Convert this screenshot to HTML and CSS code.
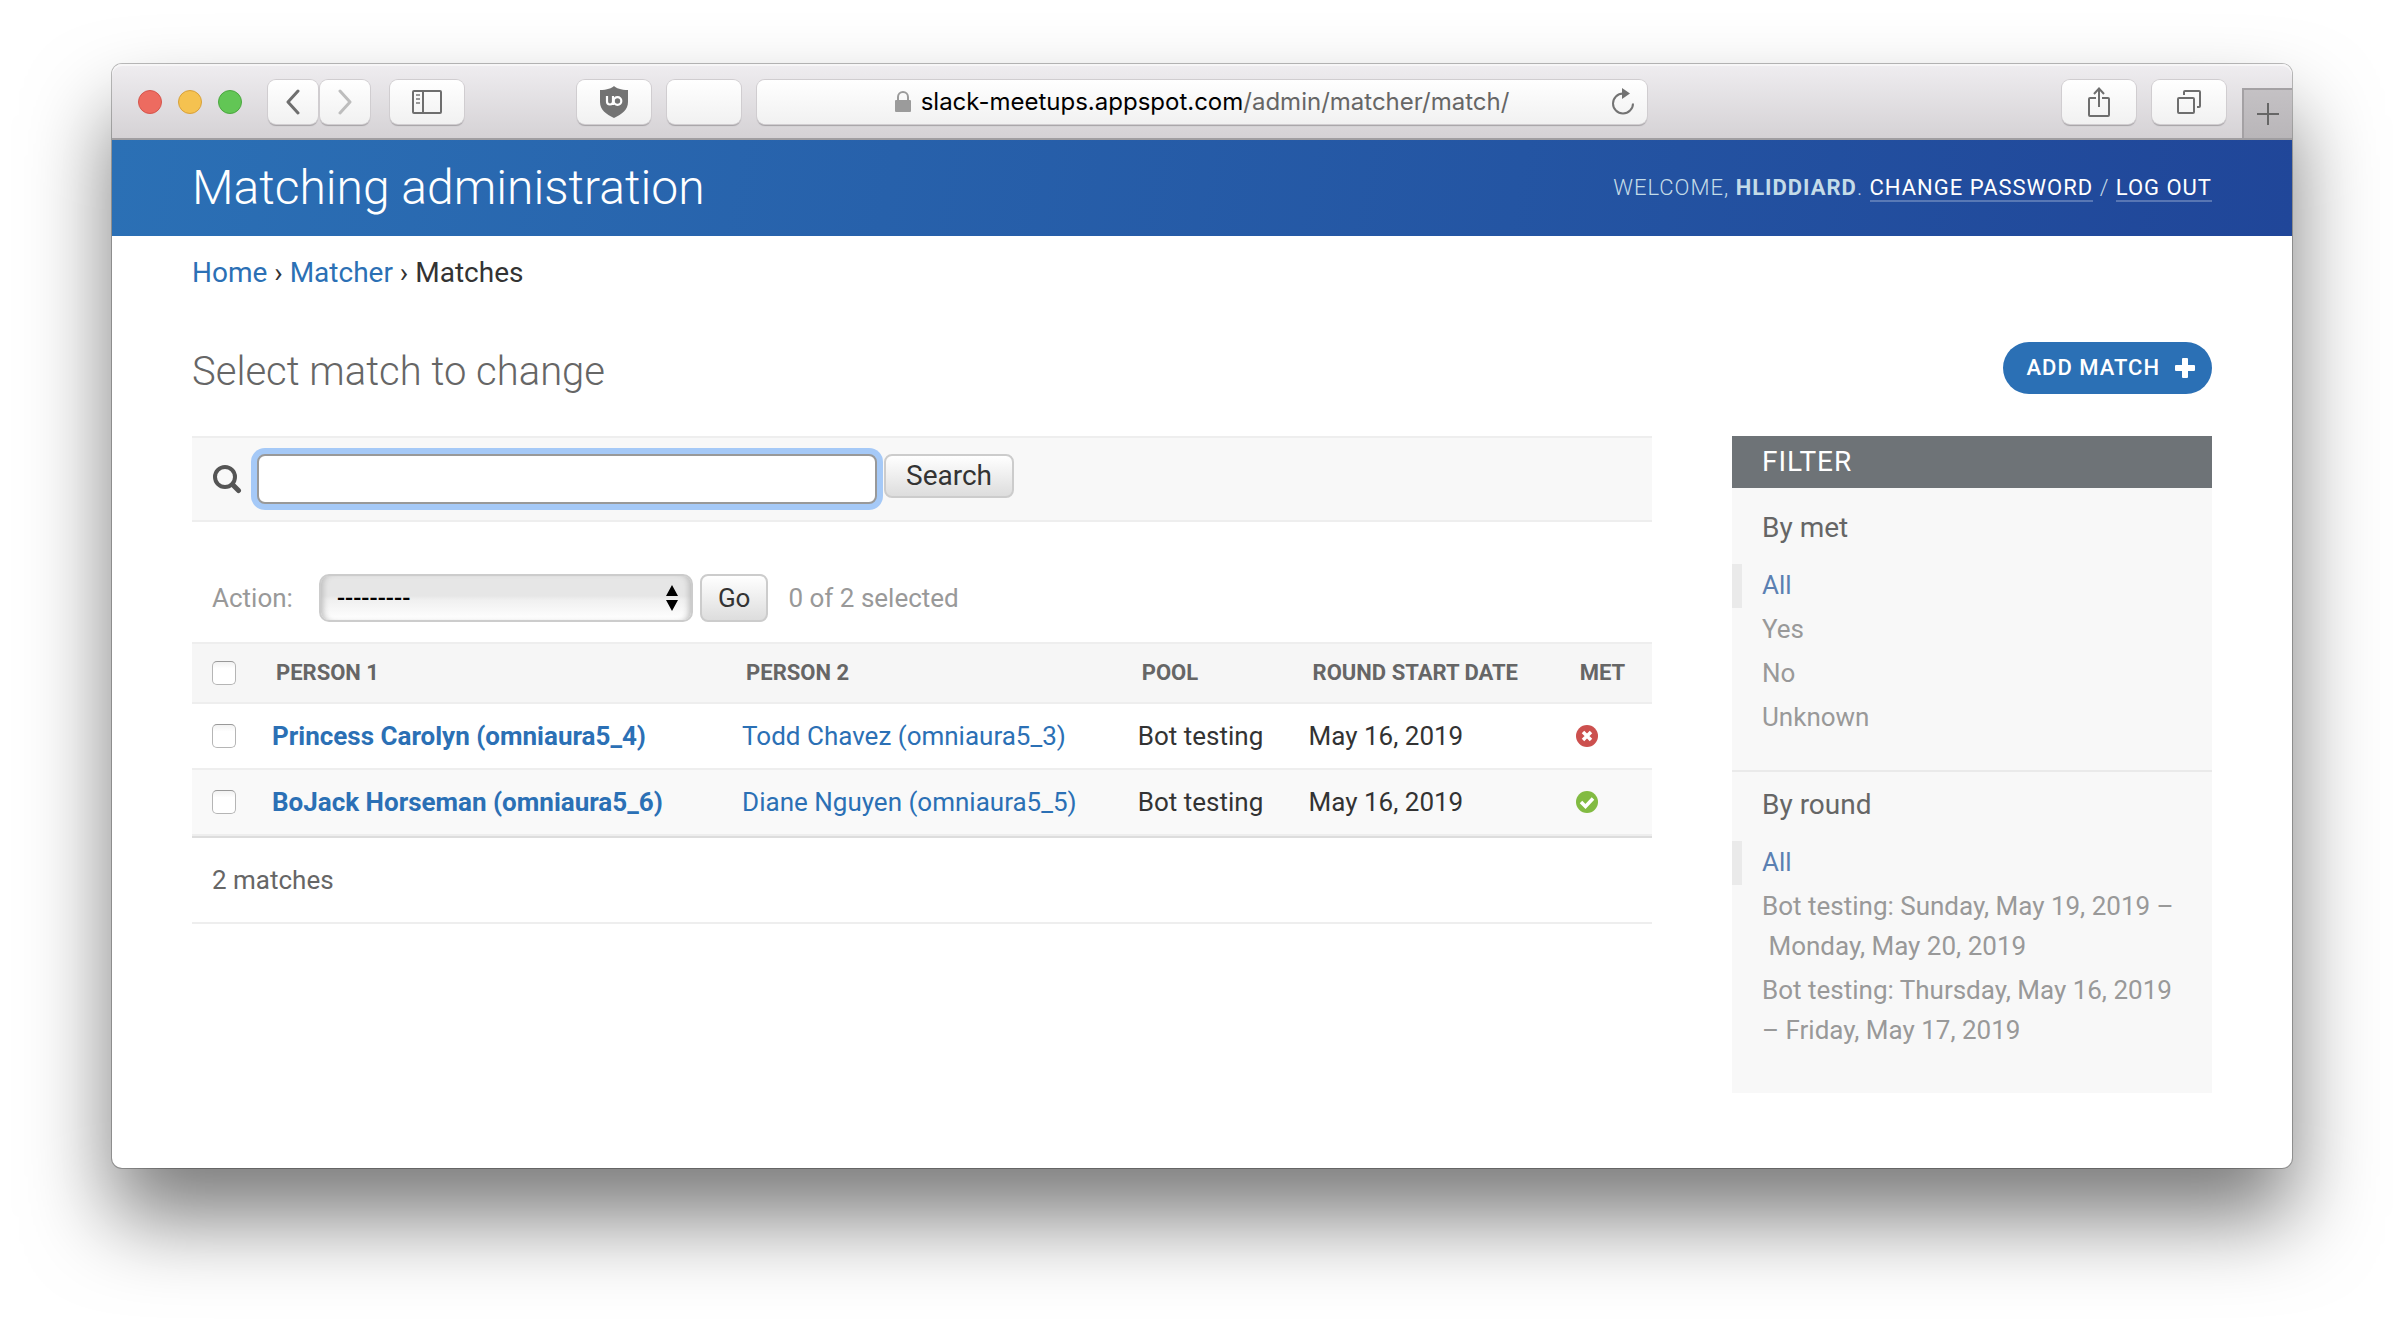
FILE: index.html
```html
<!DOCTYPE html>
<html lang="en">
<head>
<meta charset="utf-8">
<title>Select match to change | Matching administration</title>
<link rel="stylesheet" href="styles.css">
</head>
<body>
<div class="window">
  <div class="toolbar">
    <div class="toolbar-side">
      <div class="lights"><span class="light red"></span><span class="light yellow"></span><span class="light green"></span></div>
      <div class="nav">
        <button class="tool half" aria-label="Back"><svg width="16" height="26" viewBox="0 0 16 26" fill="none" stroke="#6e6e6e" stroke-width="3" stroke-linecap="round" stroke-linejoin="round"><path d="M13 2 3 13l10 11"/></svg></button>
        <button class="tool half" aria-label="Forward"><svg width="16" height="26" viewBox="0 0 16 26" fill="none" stroke="#bdbdbd" stroke-width="3" stroke-linecap="round" stroke-linejoin="round"><path d="m3 2 10 11L3 24"/></svg></button>
      </div>
      <button class="tool" aria-label="Show sidebar"><svg width="30" height="24" viewBox="0 0 30 24" fill="none" stroke="#6e6e6e" stroke-width="2"><rect x="1" y="1" width="28" height="22" rx="1"/><path d="M11 1v22"/><path d="M4 5h4M4 9h4M4 13h4" stroke="#999"/></svg></button>
      <div class="extensions">
        <button class="tool" aria-label="uBlock"><svg width="28" height="32" viewBox="0 0 28 32"><path d="M14 0c2 2 7 4 14 4v12c0 8-6 12-14 16C6 28 0 24 0 16V4c7 0 12-2 14-4z" fill="#737373"/><path d="M7 10v5.500a3 3 0 0 0 6 0V10M13 19v-4" fill="none" stroke="#fff" stroke-width="2.200"/><circle cx="17.500" cy="15" r="3.800" fill="none" stroke="#fff" stroke-width="2.200"/></svg></button>
        <button class="tool" aria-label="Extension"></button>
      </div>
    </div>
    <div class="address">
      <svg class="lock" width="16" height="22" viewBox="0 0 16 22"><rect y="9" width="16" height="12" rx="1" fill="#9b9b9b"/><path d="M3 10V6a5 5 0 0 1 10 0v4" fill="none" stroke="#9b9b9b" stroke-width="2"/></svg>
      <span class="url"><span class="domain">slack-meetups.appspot.com</span>/admin/matcher/match/</span>
      <button class="reload" aria-label="Reload"><svg width="24" height="28" viewBox="0 0 24 28"><path d="M12 5.500A10 10 0 1 0 22 15.500" fill="none" stroke="#737373" stroke-width="2"/><path d="M11 0l8 5.500-8 5.500z" fill="#737373"/></svg></button>
    </div>
    <div class="toolbar-side end">
      <button class="tool" aria-label="Share"><svg width="22" height="30" viewBox="0 0 22 30" fill="none" stroke="#6e6e6e" stroke-width="2"><path d="M8 11H2q-1 0-1 1v16q0 1 1 1h18q1 0 1-1V12q0-1-1-1h-6M11 20V2M6 7l5-5.500L16 7"/></svg></button>
      <button class="tool" aria-label="Show all tabs"><svg width="24" height="24" viewBox="0 0 24 24" fill="none" stroke="#6e6e6e" stroke-width="2"><rect x="1" y="8" width="16" height="15" rx="1"/><path d="M7 5V2q0-1 1-1h14q1 0 1 1v14q0 1-1 1h-2"/></svg></button>
      <button class="new-tab" aria-label="New tab"><svg width="22" height="22" viewBox="0 0 22 22" stroke="#666" stroke-width="2"><path d="M11 0v22M0 11h22"/></svg></button>
    </div>
  </div>

  <header class="header">
    <h1 class="branding">Matching administration</h1>
    <div class="user-tools">Welcome, <strong>hliddiard</strong>. <a href="#">Change password</a> / <a href="#">Log out</a></div>
  </header>
  <nav class="breadcrumbs"><a href="#">Home</a> › <a href="#">Matcher</a> › Matches</nav>

  <main class="content">
    <div class="title-row">
      <h2 class="title">Select match to change</h2>
      <a class="add" href="#">Add match <svg width="20" height="20" viewBox="0 0 20 20" fill="#fff"><path d="M8 0h4q1 0 1 1v6h6q1 0 1 1v4q0 1-1 1h-6v6q0 1-1 1H8q-1 0-1-1v-6H1q-1 0-1-1V8q0-1 1-1h6V1q0-1 1-1z"/></svg></a>
    </div>
    <div class="columns">
      <div class="changelist">
        <form class="search">
          <label for="q" aria-label="Search"><svg width="30" height="30" viewBox="0 0 30 30" fill="none" stroke="#555" stroke-linecap="round"><circle cx="13" cy="13" r="10" stroke-width="4"/><path d="m20.500 20.500 6 6" stroke-width="5"/></svg></label>
          <input class="search-input" id="q" type="text">
          <button class="button" type="button">Search</button>
        </form>
        <div class="actions">
          <label for="action">Action:</label>
          <div class="select-wrap">
            <select class="select" id="action"><option>---------</option></select>
            <svg class="arrows" width="14" height="26" viewBox="0 0 14 26"><path d="M7 0l6 11H1zM7 26l6-11H1z"/></svg>
          </div>
          <button class="button go" type="button">Go</button>
          <span class="counter">0 of 2 selected</span>
        </div>
        <table class="results">
          <colgroup><col class="col-check"><col class="col-person-1"><col class="col-person-2"><col class="col-pool"><col class="col-date"><col></colgroup>
          <thead>
            <tr><th class="check"><input class="box" type="checkbox" aria-label="Select all"></th><th>Person 1</th><th>Person 2</th><th>Pool</th><th>Round start date</th><th>Met</th></tr>
          </thead>
          <tbody>
            <tr><td class="check"><input class="box" type="checkbox" aria-label="Select Princess Carolyn"></td><td><a class="strong" href="#">Princess Carolyn (omniaura5_4)</a></td><td><a href="#">Todd Chavez (omniaura5_3)</a></td><td>Bot testing</td><td>May 16, 2019</td><td><svg class="status" role="img" aria-label="False" width="22" height="22" viewBox="0 0 22 22"><circle cx="11" cy="11" r="11" fill="#cc504e"/><path d="m7 7 8 8m0-8-8 8" stroke="#fff" stroke-width="3.500"/></svg></td></tr>
            <tr><td class="check"><input class="box" type="checkbox" aria-label="Select BoJack Horseman"></td><td><a class="strong" href="#">BoJack Horseman (omniaura5_6)</a></td><td><a href="#">Diane Nguyen (omniaura5_5)</a></td><td>Bot testing</td><td>May 16, 2019</td><td><svg class="status" role="img" aria-label="True" width="22" height="22" viewBox="0 0 22 22"><circle cx="11" cy="11" r="11" fill="#82bb42"/><path d="m5 11 4.500 4.500 7.500-8" stroke="#fff" stroke-width="3.500" fill="none"/></svg></td></tr>
          </tbody>
        </table>
        <p class="paginator">2 matches</p>
      </div>
      <aside class="filter">
        <h2 class="filter-title">Filter</h2>
        <section class="facet first">
          <h3>By met</h3>
          <ul>
            <li class="selected"><a href="#">All</a></li>
            <li><a href="#">Yes</a></li>
            <li><a href="#">No</a></li>
            <li><a href="#">Unknown</a></li>
          </ul>
        </section>
        <section class="facet">
          <h3>By round</h3>
          <ul>
            <li class="selected"><a href="#">All</a></li>
            <li><a href="#">Bot testing: Sunday, May 19, 2019 –<br>&nbsp;Monday, May 20, 2019</a></li>
            <li><a href="#">Bot testing: Thursday, May 16, 2019 – Friday, May 17, 2019</a></li>
          </ul>
        </section>
      </aside>
    </div>
  </main>
</div>
</body>
</html>
```
FILE: styles.css
```css
* { box-sizing: border-box; }

body {
  margin: 0;
  padding: 64px 112px 160px;
  background: #fff;
  color: #333;
  font: 26px/32px Roboto, sans-serif;
}

h1, h2, h3, ul, p { margin: 0; padding: 0; }
button, input, select { font-family: inherit; margin: 0; }
svg { display: block; flex: none; }
a { color: #2b70b5; text-decoration: none; }

.window {
  border-radius: 10px;
  background: #fff;
  box-shadow: 0 0 0 1px rgba(0, 0, 0, .26), 0 50px 84px rgba(0, 0, 0, .52);
}

/* Browser toolbar */
.toolbar {
  display: flex;
  gap: 16px;
  height: 76px;
  padding-top: 2px;
  border-bottom: 2px solid #a09ea1;
  border-radius: 10px 10px 0 0;
  background: linear-gradient(#efedf0, #d5d2d5);
  box-shadow: inset 0 2px #f7f6f7;
}
.toolbar-side { display: flex; flex: 1; align-items: center; }
.lights { display: flex; gap: 16px; padding: 0 26px; }
.light { width: 24px; height: 24px; border-radius: 50%; }
.red { background: #ed6b60; border: 1px solid #d5554c; }
.yellow { background: #f5c250; border: 1px solid #d8a13a; }
.green { background: #62c655; border: 1px solid #4ba73f; }
.nav { display: flex; gap: 2px; margin-right: 20px; }
.tool {
  display: flex;
  align-items: center;
  justify-content: center;
  width: 74px;
  height: 44px;
  padding: 0;
  border: 0;
  border-radius: 8px;
  background: linear-gradient(#fff, #f1f1f1);
  box-shadow: 0 0 0 1px #d0cdd0, 0 2px 1px #a5a2a5;
}
.half { width: 50px; }
.extensions { display: flex; gap: 16px; margin-left: auto; }
.address {
  display: flex;
  flex: 0 1 890px;
  align-items: center;
  align-self: center;
  justify-content: center;
  height: 44px;
  padding: 0 12px 0 36px;
  border-radius: 8px;
  background: linear-gradient(#fff, #f1f1f1);
  box-shadow: 0 0 0 1px #d0cdd0, 0 2px 1px #a5a2a5;
}
.lock { margin: 0 10px 0 auto; }
.url { color: #666; font: 24px/32px Inter, sans-serif; white-space: nowrap; }
.domain { color: #000; }
.reload { margin-left: auto; padding: 0; border: 0; background: none; }
.end { gap: 16px; justify-content: flex-end; }
.new-tab {
  display: flex;
  align-items: center;
  align-self: flex-end;
  justify-content: center;
  width: 50px;
  height: 50px;
  padding: 0;
  border: solid #a4a1a4;
  border-width: 2px 0 0 2px;
  background: linear-gradient(#c4c1c4, #b9b6b9);
}

/* Site header */
.header {
  display: flex;
  align-items: center;
  justify-content: space-between;
  min-height: 96px;
  padding: 0 80px;
  background: linear-gradient(100deg, #2b70b5, #204699);
  color: #c4dce8;
}
.branding { color: #fff; font-size: 48px; font-weight: 300; line-height: 56px; }
.user-tools { font-size: 22px; line-height: 26px; letter-spacing: 1px; text-transform: uppercase; font-weight: 300; }
.user-tools strong { font-weight: 700; }
.user-tools a { border-bottom: 2px solid rgba(255, 255, 255, .25); color: #fff; font-weight: 400; }
.breadcrumbs { padding: 21px 80px 19px; font-size: 28px; }

.content { padding: 34px 80px 75px; }
.title-row { display: flex; align-items: flex-start; justify-content: space-between; margin-bottom: 34px; }
.title { color: #666; font-size: 40px; font-weight: 300; line-height: 60px; }
.add {
  display: flex;
  align-items: center;
  gap: 15px;
  height: 52px;
  padding: 0 17px 0 23px;
  border-radius: 26px;
  background: #2b70b5;
  color: #fff;
  font-size: 22px;
  font-weight: 500;
  letter-spacing: 1px;
  text-transform: uppercase;
}
.columns { display: flex; align-items: flex-start; gap: 80px; }
.changelist { flex: 1; min-width: 0; }

/* Search bar */
.search {
  display: flex;
  align-items: flex-start;
  padding: 16px 20px;
  border: solid #eee;
  border-width: 2px 0;
  background: #f8f8f8;
}
.search label { align-self: center; margin-right: 15px; }
.search-input {
  width: 620px;
  height: 50px;
  margin-right: 7px;
  padding: 4px 12px;
  border: 2px solid #999;
  border-radius: 8px;
  background: #fff;
  box-shadow: 0 0 0 6px #a5c9f7;
  font-size: 26px;
  outline: 0;
}
.button {
  height: 44px;
  padding: 0 20px;
  border: 2px solid #ccc;
  border-radius: 8px;
  background: linear-gradient(#fff, #ddd);
  color: #333;
  font-size: 28px;
  line-height: 32px;
}
.actions { display: flex; align-items: center; padding: 52px 20px 20px; color: #999; }
.select-wrap { position: relative; margin: 0 7px 0 26px; }
.select {
  display: block;
  width: 374px;
  height: 48px;
  padding: 0 16px;
  border: 2px solid #ccc;
  border-radius: 10px;
  appearance: none;
  background: linear-gradient(#e6e6e6 45%, #f0f0f0 55%, #fff);
  box-shadow: inset 6px 0 6px -4px #bbb, inset -6px 0 6px -4px #bbb;
  color: #000;
  font-size: 24px;
  font-weight: 500;
}
.arrows { position: absolute; top: 11px; right: 14px; pointer-events: none; }
.go { height: 48px; padding: 0 16px; font-size: 26px; }
.counter { margin-left: 20px; }

/* Results */
.results { width: 100%; table-layout: fixed; border-spacing: 0; border-bottom: 2px solid #ddd; }
.col-check { width: 64px; }
.col-person-1 { width: 32.2%; }
.col-person-2 { width: 27.1%; }
.col-pool { width: 11.7%; }
.col-date { width: 18.3%; }
.results th {
  padding: 16px 0 16px 20px;
  border: solid #eee;
  border-width: 2px 0;
  background: #f6f6f6;
  color: #666;
  font-size: 22px;
  font-weight: 700;
  line-height: 26px;
  text-align: left;
  text-transform: uppercase;
}
.results td { padding: 16px 0 16px 16px; border-bottom: 2px solid #eee; }
.results tbody tr:nth-child(2) { background: #f9f9f9; }
.results .check { padding: 0 20px; }
.strong { font-weight: 700; }
.box {
  display: block;
  width: 24px;
  height: 24px;
  margin: 0;
  border: 1px solid #b5b5b5;
  border-top-color: #999;
  border-radius: 5px;
  appearance: none;
  background: linear-gradient(#f2f2f2, #fff 30%);
}
.paginator { padding: 26px 20px; border-bottom: 2px solid #eee; color: #666; }

/* Filter sidebar */
.filter { width: 480px; background: #f8f8f8; padding-bottom: 10px; }
.filter-title {
  padding: 10px 30px;
  background: #6e7377;
  color: #fff;
  font-size: 28px;
  font-weight: 400;
  line-height: 32px;
  letter-spacing: 1px;
  text-transform: uppercase;
}
.facet { padding: 15px 0 30px; }
.facet.first { padding-top: 22px; border-bottom: 2px solid #eaeaea; }
.facet h3 { padding: 0 30px; margin-bottom: 18px; color: #666; font-size: 28px; font-weight: 400; line-height: 36px; }
.facet ul { list-style: none; }
.facet li { padding: 1px 20px 3px; border-left: 10px solid transparent; line-height: 40px; }
.facet li a { color: #999; }
.facet .selected { border-color: #eaeaea; }
.facet .selected a { color: #5b80b2; }
```
